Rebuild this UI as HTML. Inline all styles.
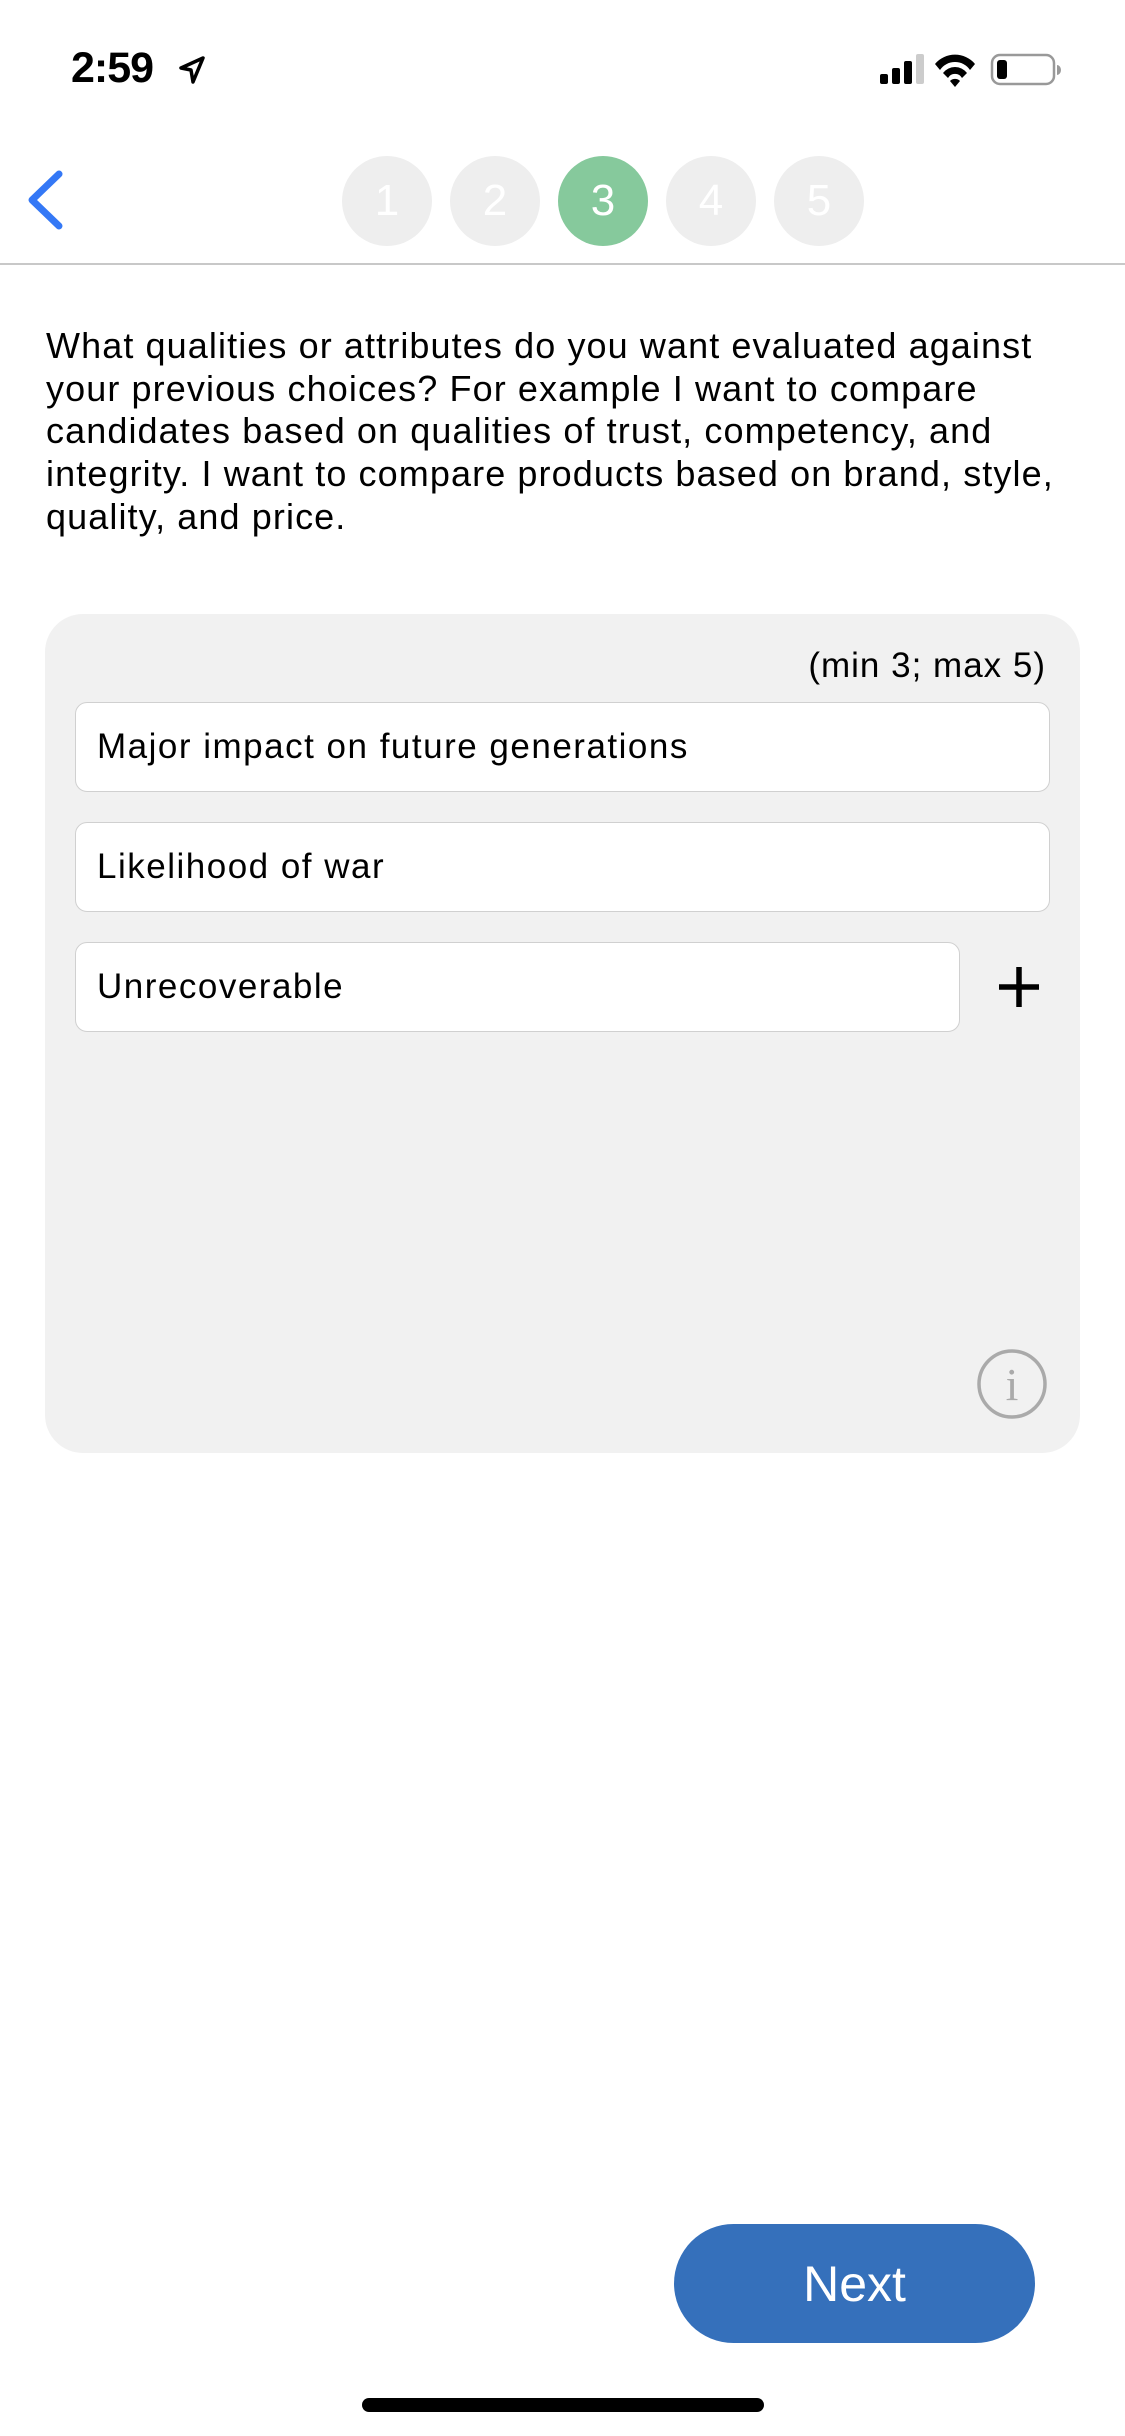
<!DOCTYPE html>
<html><head><meta charset="utf-8"><style>
*{margin:0;padding:0;box-sizing:border-box}
body{width:1125px;height:2436px;background:#fff;font-family:"Liberation Sans",sans-serif;position:relative;overflow:hidden;color:#000}
.abs{position:absolute}
.c{position:absolute;top:156px;width:90px;height:90px;border-radius:50%;background:#eeeeee;color:#fff;font-size:44px;display:flex;align-items:center;justify-content:center}
.inp{position:absolute;left:75px;height:90px;background:#fff;border:1.5px solid #d0d0d0;border-radius:12px;font-size:35px;letter-spacing:1.5px;padding-left:21px;display:flex;align-items:center}
</style></head><body>
<div class="abs" style="left:71px;top:44px;font-size:43px;font-weight:bold;letter-spacing:-1px">2:59</div>
<svg class="abs" style="left:178px;top:55px" width="28" height="30" viewBox="0 0 28 30"><path d="M25 3 L3 13 L13 15 L15 27 Z" fill="none" stroke="#000" stroke-width="3.5" stroke-linejoin="round"/></svg>
<svg class="abs" style="left:880px;top:52px" width="200" height="36" viewBox="0 0 200 36">
<rect x="0" y="22" width="8" height="10" rx="2" fill="#000"/><rect x="12" y="16" width="8" height="16" rx="2" fill="#000"/><rect x="24" y="9" width="8" height="23" rx="2" fill="#000"/><rect x="36" y="2" width="8" height="30" rx="2" fill="#ccc"/>
<path d="M55 12 A26 26 0 0 1 95 12 L90 18 A18 18 0 0 0 60 18 Z" fill="#000"/><path d="M63 21 A15 15 0 0 1 87 21 L82 26 A8 8 0 0 0 68 26 Z" fill="#000"/><path d="M70 29 L75 35 L80 29 A7 7 0 0 0 70 29Z" fill="#000"/>
<rect x="112" y="3" width="62" height="29" rx="8" fill="none" stroke="#999" stroke-width="2.5"/><rect x="117" y="8" width="10" height="19" rx="3" fill="#000"/><path d="M177 13 a4 5 0 0 1 0 10z" fill="#999"/></svg>
<svg class="abs" style="left:22px;top:168px" width="44" height="64" viewBox="0 0 44 64"><path d="M37 6 L10 32 L37 58" fill="none" stroke="#3478f6" stroke-width="7" stroke-linecap="round" stroke-linejoin="round"/></svg>
<div class="c" style="left:342px">1</div><div class="c" style="left:450px">2</div><div class="c" style="left:558px;background:#86c99c">3</div><div class="c" style="left:666px">4</div><div class="c" style="left:774px">5</div>
<div class="abs" style="left:0;top:263px;width:1125px;height:2px;background:#c8c8c8"></div>
<div class="abs" style="left:46px;top:325px;white-space:nowrap;font-size:36px;letter-spacing:1.1px;line-height:42.7px">What qualities or attributes do you want evaluated against<br>your previous choices? For example I want to compare<br>candidates based on qualities of trust, competency, and<br>integrity. I want to compare products based on brand, style,<br>quality, and price.</div>
<div class="abs" style="left:45px;top:614px;width:1035px;height:839px;background:#f1f1f1;border-radius:38px"></div>
<div class="abs" style="right:79px;top:646px;font-size:35px;letter-spacing:1px">(min 3; max 5)</div>
<div class="inp" style="top:702px;width:975px">Major impact on future generations</div>
<div class="inp" style="top:822px;width:975px">Likelihood of war</div>
<div class="inp" style="top:942px;width:885px">Unrecoverable</div>
<svg class="abs" style="left:995px;top:963px" width="48" height="48" viewBox="0 0 48 48"><path d="M24 4V44M4 24H44" stroke="#000" stroke-width="5.5"/></svg>
<svg class="abs" style="left:976px;top:1348px" width="72" height="72" viewBox="0 0 72 72"><circle cx="36" cy="36" r="33" fill="none" stroke="#aaa" stroke-width="3.5"/><text x="36" y="52" font-family="Liberation Serif,serif" font-size="46" fill="#aaa" text-anchor="middle">i</text></svg>
<div class="abs" style="left:674px;top:2224px;width:361px;height:119px;background:#3570bb;border-radius:60px;color:#fff;font-size:50px;display:flex;align-items:center;justify-content:center">Next</div>
<div class="abs" style="left:362px;top:2398px;width:402px;height:14px;background:#000;border-radius:7px"></div>
</body></html>
